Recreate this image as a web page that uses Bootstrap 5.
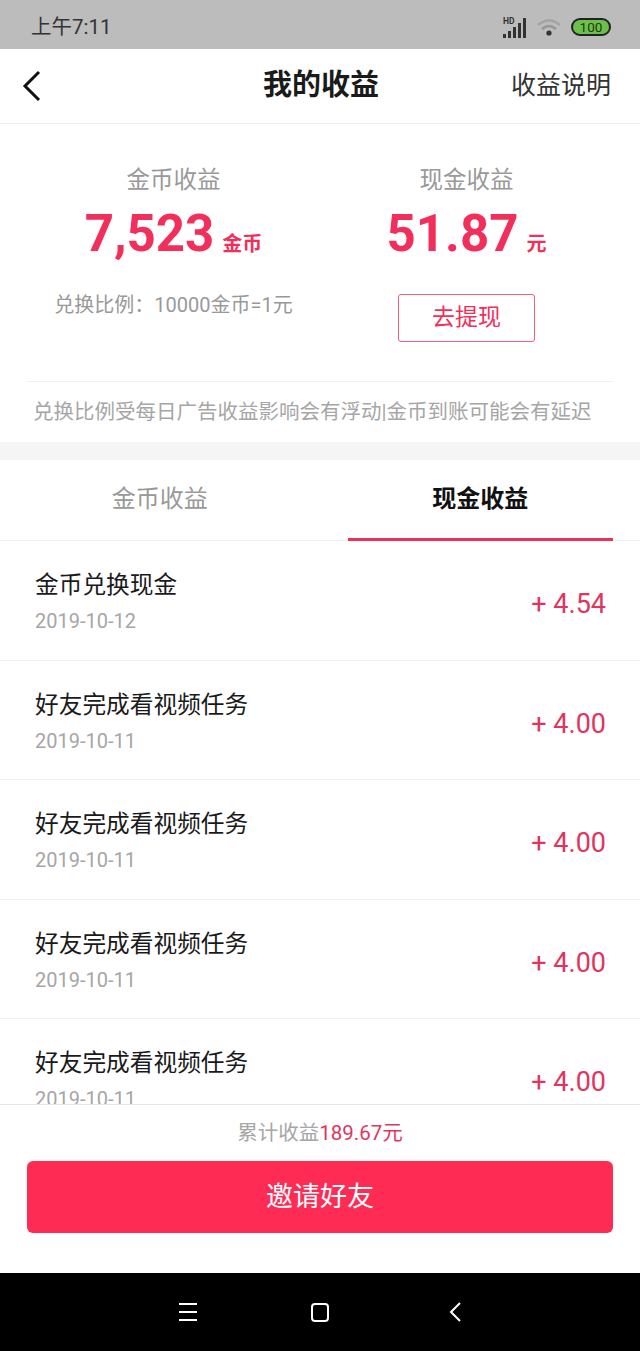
<!DOCTYPE html>
<html lang="zh-CN">
<head>
  <meta charset="UTF-8">
  <title>我的收益</title>
  <link href="https://cdn.jsdelivr.net/npm/bootstrap@5.3.3/dist/css/bootstrap.min.css" rel="stylesheet">
  <style>
    html, body { height: 1351px; overflow: hidden; }
    body {
      font-family: Roboto, "Noto Sans CJK SC", sans-serif;
      background-color: #fff;
      color: #111;
    }
    .phone { height: 1351px; }
    .status-bar { height: 49px; background-color: #bcbcbc; padding: 5px 29px 0 31px; color: #333; font-size: 20.5px; }
    .status-icons { gap: 10px; }
    .top-bar { height: 75px; padding: 0 29px 0 20px; border-bottom: 1px solid #eee; }
    .top-side { width: 110px; }
    .top-back { width: 121px; }
    .top-title { font-size: 29px; font-weight: 700; color: #1a1a1a; }
    .top-link { font-size: 25px; color: #333; white-space: nowrap; }
    .summary { height: 318px; padding: 0 27px; }
    .summary-row { height: 257px; padding-top: 38px; }
    .sum-label { font-size: 23.5px; line-height: 36px; color: #999; }
    .sum-value { font-size: 51px; line-height: 70px; font-weight: 700; color: #f22f5a; margin-top: 1px; }
    .sum-unit { font-size: 20px; font-weight: 700; margin-left: 8px; }
    .rate { font-size: 20px; line-height: 28px; color: #999; margin-top: 12px; }
    .cash-btn {
      width: 137px; height: 48px; margin-top: 15px; padding: 0;
      font-size: 23px; color: #f22f5a; border: 1px solid #ee5f7c; border-radius: 3px; background: #fff;
    }
    .summary-note {
      border-top: 1px solid #f0f0f0; height: 61px; padding-left: 6px;
      font-size: 20.5px; line-height: 60px; color: #a6a6a6; white-space: nowrap;
    }
    .band { height: 18px; background-color: #f5f5f5; }
    .tabs { height: 81px; padding: 0 27px; gap: 55px; border-bottom: 1px solid #f0f0f0; }
    .tab-item { flex: 1 1 0; text-align: center; font-size: 24px; line-height: 78px; color: #999; margin-bottom: -1px; }
    .tab-item.on { color: #111; font-weight: 700; border-bottom: 3px solid #ee3058; }
    .income-list { min-height: 0; overflow: hidden; }
    .income-row { height: 119.6px; flex-shrink: 0; padding: 26px 34px 0 35px; border-bottom: 1px solid #f0f0f0; }
    .income-title { font-size: 23.7px; line-height: 36px; color: #1a1a1a; }
    .income-date { font-size: 20px; line-height: 34px; margin-top: 1px; color: #a6a6a6; }
    .income-amount { font-size: 27px; color: #e0355f; margin-top: 17px; }
    .footer-box { height: 169px; padding: 0 27px; border-top: 1px solid #e6e6e6; }
    .total-line { font-size: 20.5px; line-height: 56px; color: #a6a6a6; }
    .total-line span { color: #e0355f; }
    .invite-btn {
      height: 72px; padding: 0; font-size: 27px; color: #fff; background-color: #fe2c55;
      border: 0; border-radius: 6px;
    }
    .nav-keys { height: 78px; background-color: #000; }
  </style>
</head>
<body>
  <div class="phone d-flex flex-column">
    <div class="status-bar d-flex align-items-center justify-content-between flex-shrink-0">
      <span>上午7:11</span>
      <span class="status-icons d-flex align-items-center">
        <svg width="25" height="21" viewBox="-1 0 25 21">
          <text x="0" y="7" font-size="8.5" font-weight="700" font-family="Roboto" fill="#333">HD</text>
          <g fill="#333"><rect x="0" y="17" width="3" height="4"/><rect x="5" y="14" width="3" height="7"/><rect x="10" y="10" width="3" height="11"/><rect x="15" y="6" width="3" height="15"/><rect x="20" y="1" width="3" height="20"/></g>
        </svg>
        <svg width="24" height="18" viewBox="0 0 24 18" fill="none">
          <path d="M1 7 Q12 -2 23 7" stroke="#a3a3a3" stroke-width="2.4"/>
          <path d="M5 11 Q12 5 19 11" stroke="#969696" stroke-width="2.4"/>
          <circle cx="12" cy="15" r="2.6" fill="#333"/>
        </svg>
        <svg width="40" height="18" viewBox="0 0 40 18">
          <rect x="1" y="1" width="38" height="16" rx="8" fill="#6cc04a" stroke="#222" stroke-width="2"/>
          <text x="20" y="14" text-anchor="middle" font-size="13.5" font-family="Roboto" fill="#1c3a10">100</text>
        </svg>
      </span>
    </div>

    <div class="top-bar d-flex align-items-center justify-content-between flex-shrink-0">
      <div class="top-back">
        <svg class="d-block" width="24" height="34" viewBox="0 0 24 34" fill="none">
          <path d="M19 3 L5 17 L19 31" stroke="#111" stroke-width="3"/>
        </svg>
      </div>
      <div class="top-title">我的收益</div>
      <div class="top-side text-end top-link">收益说明</div>
    </div>

    <div class="summary flex-shrink-0">
      <div class="row g-0 summary-row text-center">
        <div class="col-6">
          <div class="sum-label">金币收益</div>
          <div class="sum-value">7,523<span class="sum-unit">金币</span></div>
          <div class="rate">兑换比例：10000金币=1元</div>
        </div>
        <div class="col-6">
          <div class="sum-label">现金收益</div>
          <div class="sum-value">51.87<span class="sum-unit">元</span></div>
          <button type="button" class="btn cash-btn">去提现</button>
        </div>
      </div>
      <div class="summary-note">兑换比例受每日广告收益影响会有浮动|金币到账可能会有延迟</div>
    </div>

    <div class="band flex-shrink-0"></div>

    <div class="tabs d-flex flex-shrink-0">
      <div class="tab-item">金币收益</div>
      <div class="tab-item on">现金收益</div>
    </div>

    <div class="income-list flex-grow-1 d-flex flex-column">
      <div class="income-row d-flex justify-content-between">
        <div><div class="income-title">金币兑换现金</div><div class="income-date">2019-10-12</div></div>
        <div class="income-amount">+ 4.54</div>
      </div>
      <div class="income-row d-flex justify-content-between">
        <div><div class="income-title">好友完成看视频任务</div><div class="income-date">2019-10-11</div></div>
        <div class="income-amount">+ 4.00</div>
      </div>
      <div class="income-row d-flex justify-content-between">
        <div><div class="income-title">好友完成看视频任务</div><div class="income-date">2019-10-11</div></div>
        <div class="income-amount">+ 4.00</div>
      </div>
      <div class="income-row d-flex justify-content-between">
        <div><div class="income-title">好友完成看视频任务</div><div class="income-date">2019-10-11</div></div>
        <div class="income-amount">+ 4.00</div>
      </div>
      <div class="income-row d-flex justify-content-between">
        <div><div class="income-title">好友完成看视频任务</div><div class="income-date">2019-10-11</div></div>
        <div class="income-amount">+ 4.00</div>
      </div>
    </div>

    <div class="footer-box flex-shrink-0">
      <div class="total-line text-center">累计收益<span>189.67元</span></div>
      <button type="button" class="btn invite-btn w-100">邀请好友</button>
    </div>

    <div class="nav-keys d-flex align-items-center justify-content-center flex-shrink-0">
      <svg width="300" height="24" viewBox="0 0 300 24" fill="none" stroke="#fff" stroke-width="2">
        <path d="M9 4 H27 M9 12 H27 M9 20 H27"/>
        <rect x="142" y="4" width="16" height="17" rx="3"/>
        <path d="M290 3 L281 12 L290 21"/>
      </svg>
    </div>
  </div>
</body>
</html>
